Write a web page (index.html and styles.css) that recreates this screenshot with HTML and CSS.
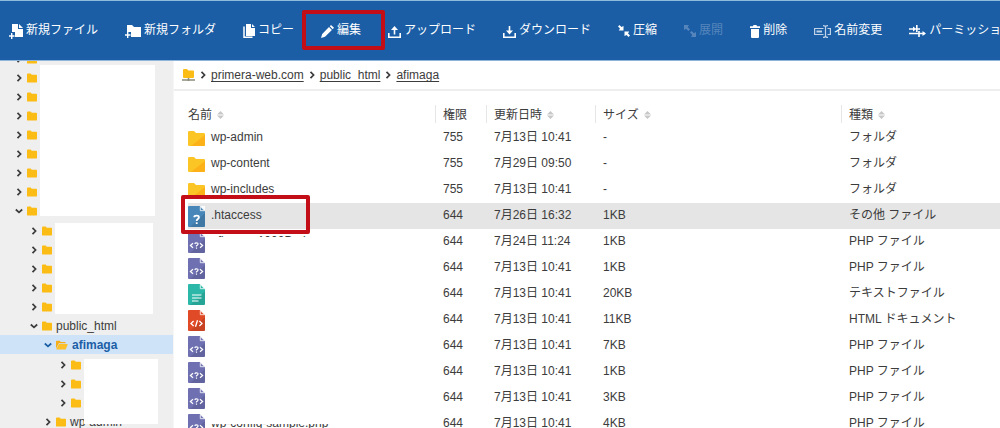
FILE: index.html
```html
<!DOCTYPE html>
<html lang="ja">
<head>
<meta charset="utf-8">
<meta name="viewport" content="width=device-width, initial-scale=1">
<title>ファイルマネージャ</title>
<link rel="stylesheet" href="styles.css">
</head>
<body>
<svg class="symbols" aria-hidden="true">
  <symbol id="chev" viewBox="0 0 8 8"><path d="M2.5 .8 5.6 4 2.5 7.2" fill="none" stroke="currentColor" stroke-width="1.7"/></symbol>
  <symbol id="chev-down" viewBox="0 0 8 8"><path d="M.8 2.5 4 5.4 7.2 2.5" fill="none" stroke="currentColor" stroke-width="1.7"/></symbol>
  <symbol id="folder" viewBox="0 0 11 10"><path d="M0 1Q0 0 1 0H4L5.3 1.5H10.2Q11 1.5 11 2.3V9Q11 10 10 10H1Q0 10 0 9Z" fill="#fbbc16"/></symbol>
  <symbol id="folder-open" viewBox="0 0 13 10"><path d="M0 9V1.5Q0 .5 1 .5H4L5.2 1.8H9.5Q10.5 1.8 10.5 3H3Z" fill="#f5ad18"/><path d="M3 4H12.8L10.6 9.8H.3Z" fill="#fbc02a"/></symbol>
  <symbol id="folder-big" viewBox="0 0 17 15"><path d="M0 1.2Q0 0 1.2 0H6L8 2H15.8Q17 2 17 3.2V13.8Q17 15 15.8 15H1.2Q0 15 0 13.8Z" fill="#fcc526"/><path d="M17 4V13.8Q17 15 15.8 15H3Z" fill="#fbb117"/></symbol>
  <symbol id="sheet" viewBox="0 0 17 21"><path d="M1 0H12L17 5V20Q17 21 16 21H1Q0 21 0 20V1Q0 0 1 0Z" fill="currentColor"/><path d="M17 7V20Q17 21 16 21H2Z" fill="#000" opacity=".1"/><path d="M12 0H17V5Z" fill="#fff" opacity=".85"/><path d="M12.3.6V4.7H16.5Z" fill="currentColor" stroke="#fff" stroke-width=".8"/></symbol>
  <symbol id="php" viewBox="0 0 17 21"><use href="#sheet"/><path d="M5 11.3 2.4 13.5 5 15.7M12 11.3 14.6 13.5 12 15.7M6.8 11.8Q7 10.8 8.4 10.8 10.2 10.8 10 12.1 9.8 13 8.5 13.8V14.6M8.5 15.6V16.8" fill="none" stroke="#fff" stroke-width="1.2"/></symbol>
  <symbol id="unknown" viewBox="0 0 17 21"><use href="#sheet"/><path d="M6.2 11.2Q6.3 9.6 8.7 9.6 11 9.6 10.9 11.4 10.8 12.5 9.6 13.2 8.7 13.7 8.7 15M8.7 16.2V17.9" fill="none" stroke="#fff" stroke-width="1.8"/></symbol>
  <symbol id="text" viewBox="0 0 17 21"><use href="#sheet"/><path d="M4 11H13.5M4 14H13.5M4 17H10.5" stroke="#fff" stroke-width="1.2"/></symbol>
  <symbol id="html" viewBox="0 0 17 21"><use href="#sheet"/><path d="M5.6 11 3 13.5 5.6 16M11.4 11 14 13.5 11.4 16M9.5 10.3 7.5 16.7" fill="none" stroke="#fff" stroke-width="1.3"/></symbol>
  <symbol id="sort" viewBox="0 0 8 9"><path d="M0 4 4 0 8 4ZM0 5H8L4 9Z" fill="#c8c8c8"/></symbol>
</svg>

<header class="toolbar">
  <button class="tool"><svg width="14" height="15" viewBox="0 0 14 15"><path d="M3 0H9V5H14V13H6V8H3Z M10 0 14 4H10Z" fill="currentColor"/><path d="M2.7 9V15M0 12H5.5" stroke="currentColor" stroke-width="1.4"/></svg>新規ファイル</button>
  <button class="tool"><svg width="16" height="14" viewBox="0 0 16 14"><path d="M2 1H7L9 3H16V13H6V8H2Z" fill="currentColor"/><path d="M2.7 8V14M0 11H5.5" stroke="currentColor" stroke-width="1.4"/></svg>新規フォルダ</button>
  <button class="tool"><svg width="12" height="14" viewBox="0 0 12 14"><path d="M3 0H8V4H12V12H3Z M9 0 12 3H9Z" fill="currentColor"/><path d="M1 2.5V13.2H9.5" fill="none" stroke="currentColor" stroke-width="1.5"/></svg>コピー</button>
  <button class="tool tool-marked"><svg width="13" height="13" viewBox="0 0 13 13"><path d="M10 0 13 2.8 11.7 4.2 8.8 1.3ZM8 2.1 10.9 5 4 11.8 0 13 1.2 9Z" fill="currentColor"/></svg>編集</button>
  <button class="tool"><svg width="13" height="13" viewBox="0 0 13 13"><path d="M.8 8V12.2H12.2V8" fill="none" stroke="currentColor" stroke-width="1.6"/><path d="M6.5 1 10 5H7.3V9.5H5.7V5H3Z" fill="currentColor"/></svg>アップロード</button>
  <button class="tool"><svg width="13" height="13" viewBox="0 0 13 13"><path d="M.8 8V12.2H12.2V8" fill="none" stroke="currentColor" stroke-width="1.6"/><path d="M6.5 9.5 10 5.5H7.3V1H5.7V5.5H3Z" fill="currentColor"/></svg>ダウンロード</button>
  <button class="tool"><svg width="12" height="12" viewBox="0 0 12 12"><path d="M0 1.5 1.5 0 3.4 2 5.5 1V5.6H.8L2 3.4ZM12 10.5 10.5 12 8.6 10 6.5 11V6.4H11.2L10 8.6Z" fill="currentColor"/></svg>圧縮</button>
  <button class="tool" disabled><svg width="12" height="12" viewBox="0 0 12 12"><path d="M0 0H5L3.7 2 6 4.4 4.4 6 2 3.7 0 5ZM12 12H7L8.3 10 6 7.6 7.6 6 10 8.3 12 7Z" fill="currentColor"/></svg>展開</button>
  <button class="tool"><svg width="10" height="13" viewBox="0 0 10 13"><path d="M0 1.3H3L3.5 0H6.5L7 1.3H10V3H0ZM1 4H9V12Q9 13 8 13H2Q1 13 1 12Z" fill="currentColor"/></svg>削除</button>
  <button class="tool tool-thin"><svg width="17" height="13" viewBox="0 0 17 13"><path d="M9.5 3.5H.6V9.5H9.5M13.5 3.5H16.4V9.5H13.5M9 .6Q11.5 .6 11.5 2V11Q11.5 12.4 9 12.4M14 .6Q11.5 .6 11.5 2M14 12.4Q11.5 12.4 11.5 11" fill="none" stroke="currentColor" stroke-width="1.2"/><path d="M2.5 5.5H8V7.5H2.5Z" fill="currentColor"/></svg>名前変更</button>
  <button class="tool"><svg width="17" height="12" viewBox="0 0 17 12"><path d="M0 4H5M7.8 0V7M8 4H11M0 8.5H16M10 6V12" fill="none" stroke="currentColor" stroke-width="1.6"/><path d="M4 1.5 7.5 4 4 6.5ZM13.5 6 17 8.5 13.5 11Z" fill="currentColor"/></svg>パーミッション</button>
</header>

<div class="panes">
  <nav class="sidebar" aria-label="フォルダ">
    <ul class="tree">
      <li><button class="node"><svg class="chev"><use href="#chev"/></svg><svg class="fold"><use href="#folder"/></svg></button></li>
      <li><button class="node"><svg class="chev"><use href="#chev"/></svg><svg class="fold"><use href="#folder"/></svg></button></li>
      <li><button class="node"><svg class="chev"><use href="#chev"/></svg><svg class="fold"><use href="#folder"/></svg></button></li>
      <li><button class="node"><svg class="chev"><use href="#chev"/></svg><svg class="fold"><use href="#folder"/></svg></button></li>
      <li><button class="node"><svg class="chev"><use href="#chev"/></svg><svg class="fold"><use href="#folder"/></svg></button></li>
      <li><button class="node"><svg class="chev"><use href="#chev"/></svg><svg class="fold"><use href="#folder"/></svg></button></li>
      <li><button class="node"><svg class="chev"><use href="#chev"/></svg><svg class="fold"><use href="#folder"/></svg></button></li>
      <li><button class="node"><svg class="chev"><use href="#chev"/></svg><svg class="fold"><use href="#folder"/></svg></button></li>
      <li><button class="node"><svg class="chev"><use href="#chev-down"/></svg><svg class="fold"><use href="#folder"/></svg></button>
        <ul class="branch">
          <li><button class="node level-1"><svg class="chev"><use href="#chev"/></svg><svg class="fold"><use href="#folder"/></svg></button></li>
          <li><button class="node level-1"><svg class="chev"><use href="#chev"/></svg><svg class="fold"><use href="#folder"/></svg></button></li>
          <li><button class="node level-1"><svg class="chev"><use href="#chev"/></svg><svg class="fold"><use href="#folder"/></svg></button></li>
          <li><button class="node level-1"><svg class="chev"><use href="#chev"/></svg><svg class="fold"><use href="#folder"/></svg></button></li>
          <li><button class="node level-1"><svg class="chev"><use href="#chev"/></svg><svg class="fold"><use href="#folder"/></svg></button></li>
          <li><button class="node level-1"><svg class="chev"><use href="#chev-down"/></svg><svg class="fold"><use href="#folder"/></svg>public_html</button>
            <ul>
              <li><button class="node level-2 current"><svg class="chev"><use href="#chev-down"/></svg><svg class="fold-open"><use href="#folder-open"/></svg>afimaga</button>
                <ul class="branch">
                  <li><button class="node level-3"><svg class="chev"><use href="#chev"/></svg><svg class="fold"><use href="#folder"/></svg>wp-admin</button></li>
                  <li><button class="node level-3"><svg class="chev"><use href="#chev"/></svg><svg class="fold"><use href="#folder"/></svg></button></li>
                  <li><button class="node level-3"><svg class="chev"><use href="#chev"/></svg><svg class="fold"><use href="#folder"/></svg></button></li>
                </ul>
              </li>
              <li><button class="node level-2"><svg class="chev"><use href="#chev"/></svg><svg class="fold"><use href="#folder"/></svg>wp-admin</button></li>
            </ul>
          </li>
        </ul>
      </li>
    </ul>
    <div class="mask mask-roots"></div>
    <div class="mask mask-sites"></div>
    <div class="mask mask-children"></div>
  </nav>

  <main class="content">
    <nav class="crumbs" aria-label="パス">
      <svg width="13" height="13" viewBox="0 0 13 13"><path d="M1 1Q1 0 2 0H5L6.3 1.5H11Q12 1.5 12 2.5V8Q12 9 11 9H2Q1 9 1 8Z" fill="#fbbc16"/><path d="M0 11H13M6.5 9V12" stroke="#8b8b7a" stroke-width="1.5"/></svg>
      <svg class="chev"><use href="#chev"/></svg>
      <a href="#">primera-web.com</a>
      <svg class="chev"><use href="#chev"/></svg>
      <a href="#">public_html</a>
      <svg class="chev"><use href="#chev"/></svg>
      <a href="#">afimaga</a>
    </nav>
    <div class="listing">
      <table class="files">
        <colgroup><col class="col-name"><col class="col-mode"><col class="col-date"><col class="col-size"><col></colgroup>
        <thead>
          <tr>
            <th><button class="sort">名前<svg><use href="#sort"/></svg></button></th>
            <th>権限</th>
            <th><button class="sort">更新日時<svg><use href="#sort"/></svg></button></th>
            <th><button class="sort">サイズ<svg><use href="#sort"/></svg></button></th>
            <th><button class="sort">種類<svg><use href="#sort"/></svg></button></th>
          </tr>
        </thead>
        <tbody>
          <tr><td><div class="name"><svg class="dir"><use href="#folder-big"/></svg>wp-admin</div></td><td>755</td><td>7月13日 10:41</td><td>-</td><td>フォルダ</td></tr>
          <tr><td><div class="name"><svg class="dir"><use href="#folder-big"/></svg>wp-content</div></td><td>755</td><td>7月29日 09:50</td><td>-</td><td>フォルダ</td></tr>
          <tr><td><div class="name"><svg class="dir"><use href="#folder-big"/></svg>wp-includes</div></td><td>755</td><td>7月13日 10:41</td><td>-</td><td>フォルダ</td></tr>
          <tr class="selected"><td><div class="name name-marked"><svg class="doc doc-other"><use href="#unknown"/></svg>.htaccess</div></td><td>644</td><td>7月26日 16:32</td><td>1KB</td><td>その他 ファイル</td></tr>
          <tr><td><div class="name"><svg class="doc doc-php"><use href="#php"/></svg>afimaga-1000D.php</div></td><td>644</td><td>7月24日 11:24</td><td>1KB</td><td>PHP ファイル</td></tr>
          <tr><td><div class="name"><svg class="doc doc-php"><use href="#php"/></svg></div></td><td>644</td><td>7月13日 10:41</td><td>1KB</td><td>PHP ファイル</td></tr>
          <tr><td><div class="name"><svg class="doc doc-text"><use href="#text"/></svg></div></td><td>644</td><td>7月13日 10:41</td><td>20KB</td><td>テキストファイル</td></tr>
          <tr><td><div class="name"><svg class="doc doc-html"><use href="#html"/></svg></div></td><td>644</td><td>7月13日 10:41</td><td>11KB</td><td>HTML ドキュメント</td></tr>
          <tr><td><div class="name"><svg class="doc doc-php"><use href="#php"/></svg></div></td><td>644</td><td>7月13日 10:41</td><td>7KB</td><td>PHP ファイル</td></tr>
          <tr><td><div class="name"><svg class="doc doc-php"><use href="#php"/></svg></div></td><td>644</td><td>7月13日 10:41</td><td>1KB</td><td>PHP ファイル</td></tr>
          <tr><td><div class="name"><svg class="doc doc-php"><use href="#php"/></svg></div></td><td>644</td><td>7月13日 10:41</td><td>3KB</td><td>PHP ファイル</td></tr>
          <tr><td><div class="name"><svg class="doc doc-php"><use href="#php"/></svg>wp-config-sample.php</div></td><td>644</td><td>7月13日 10:41</td><td>4KB</td><td>PHP ファイル</td></tr>
        </tbody>
      </table>
      <div class="mask mask-files"></div>
    </div>
  </main>
</div>
</body>
</html>
```
FILE: styles.css
```css
*, ::before, ::after { box-sizing: border-box; }

body {
  margin: 0;
  height: 100vh;
  display: flex;
  flex-direction: column;
  overflow: hidden;
  background: #fff;
  color: #3c3c3c;
  font: 12px/16px "Liberation Sans", "Noto Sans CJK JP", sans-serif;
}

button {
  margin: 0;
  padding: 0;
  border: 0;
  background: none;
  color: inherit;
  font: inherit;
  white-space: nowrap;
  cursor: pointer;
}

ul { margin: 0; padding: 0; list-style: none; }
svg { flex: none; }
.symbols { position: absolute; width: 0; height: 0; }

/* Toolbar */
.toolbar {
  flex: none;
  display: flex;
  align-items: center;
  gap: 27px;
  padding: 20px 9px 21px;
  border-top: 1px solid #8fbbdc;
  border-bottom: 1px solid #8fb5dc;
  background: #1b5ea6;
  color: #fff;
  overflow: hidden;
}

.tool { position: relative; flex: none; display: flex; align-items: center; gap: 3px; height: 18px; }
.tool svg { margin-top: 2px; }
.tool:disabled { color: #5685bb; }
.tool-thin svg { color: #bfd2e8; }

.tool-marked::after,
.name-marked::after {
  content: "";
  position: absolute;
  z-index: 1;
  border: 4px solid #c30d17;
  border-radius: 2px;
}
.tool-marked::after { inset: -11px -24px -11px -19px; }

/* Panes */
.panes { flex: 1; min-height: 0; display: flex; }

.sidebar {
  position: relative;
  flex: none;
  width: 174px;
  border-right: 1px solid #f6f6f6;
  background: #efefef;
  overflow: hidden;
}

.tree { margin-top: -12px; }
.branch { padding-top: 1px; }

.node {
  display: flex;
  align-items: center;
  gap: 4px;
  width: 100%;
  height: 19px;
  padding-left: 15px;
}
.level-1 { padding-left: 30px; }
.level-2 { padding-left: 44px; }
.level-3 { padding-left: 59px; }
.current { background: #cfe3f8; color: #1b5ea6; font-weight: bold; }

.chev { width: 8px; height: 8px; }
.fold { width: 10px; height: 10px; }
.fold-open { width: 12px; height: 10px; }

.mask { position: absolute; background: #fff; }
.mask-roots { left: 40px; top: 4px; width: 115px; height: 151px; }
.mask-sites { left: 55px; top: 162px; width: 98px; height: 91px; }
.mask-children { left: 84px; top: 298px; width: 74px; height: 65px; }

/* Content */
.content { flex: 1; min-width: 0; }

.crumbs {
  display: flex;
  align-items: center;
  gap: 4px;
  padding: 6px 8px;
  border-bottom: 2px solid #eee;
}
.crumbs a { color: inherit; text-underline-offset: 2px; }

.listing { position: relative; padding: 14px 0 0 14px; }

.files { width: 100%; table-layout: fixed; border-collapse: collapse; }
.col-name { width: 247px; }
.col-mode { width: 51px; }
.col-date { width: 109px; }
.col-size { width: 246px; }

.files th {
  height: 20px;
  padding: 1px 0 1px 8px;
  background: linear-gradient(#e6e6e6, #e6e6e6) 0 0 / 1px 18px no-repeat;
  font-weight: normal;
  line-height: 18px;
  text-align: left;
}
.files th:first-child { padding-left: 0; background: none; }
.files td { height: 26px; padding: 0 0 2px 8px; white-space: nowrap; }
.files td:first-child { padding: 0; }
.selected { background: #e5e5e5; }

.sort { display: flex; align-items: center; gap: 5px; }
.sort svg { width: 7px; height: 8px; }

.name { position: relative; display: flex; align-items: center; gap: 6px; height: 26px; padding-bottom: 2px; }
.name-marked::after { left: -7px; top: -8px; width: 129px; height: 39px; }
.name svg { margin-top: 2px; }
.dir { width: 17px; height: 15px; }
.doc { width: 17px; height: 21px; }
.doc-other { color: #4786b8; }
.doc-php { color: #6e70b2; }
.doc-text { color: #2bb8a8; }
.doc-html { color: #e04a26; }

.mask-files { left: 33px; top: 146px; width: 125px; height: 187px; }
```
